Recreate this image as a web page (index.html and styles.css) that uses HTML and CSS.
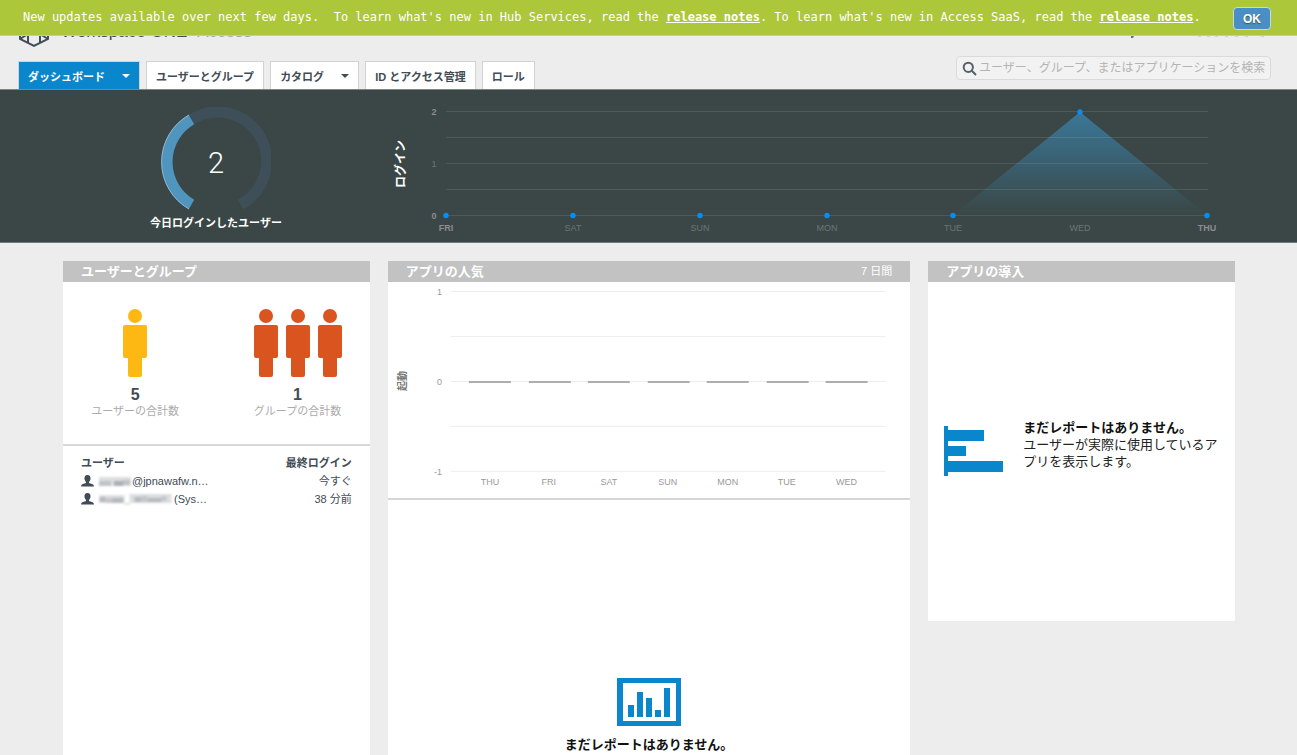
FILE: index.html
```html
<!DOCTYPE html>
<html lang="ja">
<head>
<meta charset="utf-8">
<title>Workspace ONE Access</title>
<link rel="stylesheet" href="styles.css">
</head>
<body>
<div class="notice">
  <p class="notice-text">New updates available over next few days.&nbsp; To learn what's new in Hub Services, read the <a href="#">release notes</a>. To learn what's new in Access SaaS, read the <a href="#">release notes</a>.</p>
  <button class="notice-ok" type="button">OK</button>
</div>

<header class="header">
  <div class="brand-row">
    <svg class="logo" viewBox="0 0 32 32" aria-hidden="true"><path d="M2 8L16 1l14 7v15L16 30L2 23zM2 23l8-5v-8M30 23l-8-5v-8M10 18v9M22 18v9" /></svg>
    <span class="brand">Workspace ONE</span><span class="brand-sub">Access</span>
    <svg class="account" viewBox="0 0 140 8" aria-hidden="true"><path class="account-mark" d="M0 0h3l-1 2H0z"/><path d="M67 0h3v1h-3zM76 0h3v1h-3zM84 0h3v1h-3zM94 0h3v1h-3zM104 0h3v1h-3zM114 0h3v1h-3zM130 0h3v1h-3z"/></svg>
  </div>
  <div class="nav-row">
    <nav class="tabs">
      <a class="tab tab-active" href="#">ダッシュボード<span class="caret"></span></a>
      <a class="tab" href="#">ユーザーとグループ</a>
      <a class="tab" href="#">カタログ<span class="caret"></span></a>
      <a class="tab" href="#">ID とアクセス管理</a>
      <a class="tab" href="#">ロール</a>
    </nav>
    <label class="search">
      <svg class="search-icon" viewBox="0 0 16 16" aria-hidden="true"><circle cx="6.3" cy="7.3" r="4.6"/><path d="M9.8 10.800L14 15"/></svg>
      <input type="text" placeholder="ユーザー、グループ、またはアプリケーションを検索" aria-label="検索">
    </label>
  </div>
</header>

<section class="hero">
  <div class="gauge">
    <svg class="gauge-dial" viewBox="0 0 110 104" role="img" aria-label="2">
      <path class="dial-track" d="M31 12.3A49 49 0 1 1 79.5 97.4"/>
      <path class="dial-value" d="M30.5 97.4A49 49 0 0 1 30.5 12.6"/>
      <path class="dial-shine" d="M28 102A54 54 0 0 1 28 8"/>
      <text class="dial-text" x="55" y="66">2</text>
    </svg>
    <p class="gauge-label">今日ログインしたユーザー</p>
  </div>
  <svg class="logins" viewBox="0 0 860 153" role="img" aria-label="ログイン">
    <defs><linearGradient id="fade" x1="0" y1="0" x2="0" y2="1"><stop offset="0" stop-color="#3a7798"/><stop offset="1" stop-color="#3a7798" stop-opacity="0"/></linearGradient></defs>
    <text class="logins-title" transform="translate(25 75) rotate(-90)">ログイン</text>
    <path class="logins-area" d="M573 126L700 23L827 126z"/>
    <path class="logins-grid" d="M66 22.5H828M66 48.500H828M66 74.500H828M66 100.500H828M66 126.500H828"/>
    <g class="logins-dots"><circle cx="66" cy="126.500" r="2.700"/><circle cx="193" cy="126.500" r="2.700"/><circle cx="320" cy="126.500" r="2.700"/><circle cx="447" cy="126.500" r="2.700"/><circle cx="573" cy="126.500" r="2.700"/><circle cx="700" cy="23" r="2.700"/><circle cx="827" cy="126.500" r="2.700"/></g>
    <g class="logins-text"><text class="strong" x="54" y="26">2</text><text x="54" y="78">1</text><text class="strong" x="54" y="130">0</text>
    <text class="strong" x="66" y="142">FRI</text><text x="193" y="142">SAT</text><text x="320" y="142">SUN</text><text x="447" y="142">MON</text><text x="573" y="142">TUE</text><text x="700" y="142">WED</text><text class="strong" x="827" y="142">THU</text></g>
  </svg>
</section>

<main class="cards">
  <section class="card card-tall">
    <h2 class="card-head">ユーザーとグループ</h2>
    <div class="totals">
      <div class="total">
        <svg class="people people-user" viewBox="0 0 26 70" width="26" aria-hidden="true"><g id="person"><circle cx="13" cy="7" r="7"/><rect x="1" y="16" width="24" height="33" rx="2"/><rect x="6" y="44" width="14" height="24" rx="2"/></g></svg>
        <strong class="total-number">5</strong>
        <span class="total-label">ユーザーの合計数</span>
      </div>
      <div class="total">
        <svg class="people people-group" viewBox="0 0 90 70" width="90" aria-hidden="true"><use href="#person"/><use href="#person" x="32"/><use href="#person" x="64"/></svg>
        <strong class="total-number">1</strong>
        <span class="total-label">グループの合計数</span>
      </div>
    </div>
    <table class="users">
      <thead><tr><th>ユーザー</th><th>最終ログイン</th></tr></thead>
      <tbody>
        <tr><td><div class="user"><svg class="user-icon" viewBox="0 0 13 12" aria-hidden="true"><path id="bust" d="M6.500 0C9 0 9.700 1.700 9.500 4C9.300 5.600 8.500 6.400 8 7v1c1 .7 5 .5 5 3.500H0c0-3 4-2.800 5-3.500V7C4.500 6.400 3.700 5.600 3.500 4C3.300 1.700 4 0 6.500 0z"/></svg><svg class="mask mask-short" viewBox="0 0 32 11" aria-hidden="true"><path fill="#dcdee1" d="M0 1h32v9H0z"/><path fill="#c0c2c6" d="M0 5h12v5H0zM24 4h7v5h-7z"/><path fill="#acafb5" d="M15 5h9v5h-9z"/></svg><span>@jpnawafw.n…</span></div></td><td>今すぐ</td></tr>
        <tr><td><div class="user"><svg class="user-icon" viewBox="0 0 13 12" aria-hidden="true"><use href="#bust"/></svg><svg class="mask mask-long" viewBox="0 0 72 11" aria-hidden="true"><path fill="#dcdee1" d="M0 1h25v8h5V0h42v9H30v2h-5V9H0z"/><path fill="#b6b9be" d="M0 3h6v5H0zM12 4h12v5H12zM35 3h7v5h-7zM48 4h14v4H48z"/><path fill="#c5c7cb" d="M6 4h6v5H6zM42 2h6v6h-6zM62 2h5v5h-5z"/></svg><span>(Sys…</span></div></td><td>38 分前</td></tr>
      </tbody>
    </table>
  </section>

  <section class="card card-tall">
    <h2 class="card-head">アプリの人気<span class="period">7 日間</span></h2>
    <svg class="launches" viewBox="0 0 523 216" role="img" aria-label="起動">
      <text class="launches-title" transform="translate(18 99) rotate(-90)">起動</text>
      <path class="launches-grid" d="M63 9.500H498M63 54.500H498M63 99.500H498M63 144.500H498M63 189.500H498"/>
      <path class="launches-bars" d="M81 100H123M141 100H183M200 100H242M260 100H302M319 100H361M379 100H421M438 100H480"/>
      <g class="launches-text"><g class="launches-axis"><text x="54" y="13">1</text><text x="54" y="103">0</text><text x="54" y="193">-1</text></g>
      <text x="102" y="203">THU</text><text x="161" y="203">FRI</text><text x="221" y="203">SAT</text><text x="280" y="203">SUN</text><text x="340" y="203">MON</text><text x="399" y="203">TUE</text><text x="459" y="203">WED</text></g>
    </svg>
    <div class="report-empty">
      <svg class="report-icon" viewBox="0 0 64 48" aria-hidden="true"><path fill-rule="evenodd" d="M0 0h64v48H0zM6 5v38h53V5z"/><path d="M11 27h6v12h-6zM20 14h6v25h-6zM29 20h6v19h-6zM38 32h6v7h-6zM47 10h6v29h-6z"/></svg>
      <strong>まだレポートはありません。</strong>
    </div>
  </section>

  <section class="card card-short">
    <h2 class="card-head">アプリの導入</h2>
    <div class="adoption">
      <svg class="adoption-icon" viewBox="0 0 59 50" aria-hidden="true"><path d="M0 0h4v4h36v11H4v5h18v10H4v5h55v11H4v4H0z"/></svg>
      <p><strong>まだレポートはありません。</strong><br>ユーザーが実際に使用しているアプリを表示します。</p>
    </div>
  </section>
</main>
</body>
</html>
```
FILE: styles.css
```css
* { box-sizing: border-box; }

body {
  margin: 0;
  background: #ededed;
  color: #414c56;
  font-family: "Liberation Sans", "Noto Sans CJK JP", sans-serif;
  font-size: 11px;
}

p, h2 { margin: 0; }
svg { display: block; }

.notice {
  position: fixed;
  inset: 0 0 auto 0;
  z-index: 10;
  display: flex;
  align-items: center;
  justify-content: space-between;
  height: 36px;
  padding: 0 26px 0 23px;
  background: #adc73a;
  border-bottom: 1px solid #c6d670;
  color: #fff;
}
.notice-text {
  padding-bottom: 2px;
  font: 12px/18px "DejaVu Sans Mono", monospace;
  white-space: nowrap;
}
.notice-text a { color: #fff; font-weight: bold; }
.notice-ok {
  width: 38px;
  height: 23px;
  margin-top: 2px;
  padding: 0;
  border: 1px solid #c5dbe2;
  border-radius: 4px;
  background: #498fc5;
  color: #fff;
  font: bold 12px "Liberation Sans", sans-serif;
  text-shadow: 0 1px 1px #40543a;
}

.header { padding: 16px 26px 0 18px; }
.brand-row {
  display: flex;
  align-items: center;
  height: 32px;
}
.logo {
  width: 32px;
  height: 32px;
  fill: none;
  stroke: #414c56;
  stroke-width: 2;
}
.brand { margin-left: 11px; font-size: 17px; }
.brand-sub { margin-left: 10px; color: #a5a9ad; font-size: 17px; }
.account {
  align-self: flex-end;
  width: 140px;
  height: 8px;
  margin: 0 0 4px auto;
  fill: #d0d2d3;
}
.account-mark { fill: #68717a; }
.nav-row {
  display: flex;
  justify-content: space-between;
  height: 41px;
  padding-top: 8px;
}
.tabs { display: flex; gap: 6px; padding-top: 5px; }
.tab {
  display: flex;
  align-items: center;
  height: 28px;
  padding: 0 9px;
  border: 1px solid #d2d2d2;
  border-bottom: 0;
  background: #fff;
  color: #414c56;
  font-size: 11px;
  font-weight: bold;
  text-decoration: none;
  white-space: nowrap;
}
.tab-active { background: #0a87cc; color: #fff; }
.caret {
  margin-left: 17px;
  border: 4px solid transparent;
  border-top-color: currentColor;
  border-bottom: 0;
}
.search {
  display: flex;
  align-items: center;
  width: 315px;
  height: 24px;
  padding: 0 5px;
  border: 1px solid #dadada;
  border-radius: 4px;
  background: #f2f2f2;
}
.search-icon {
  flex: none;
  width: 16px;
  height: 16px;
  fill: none;
  stroke: #58616a;
  stroke-width: 2;
}
.search input {
  flex: 1;
  min-width: 0;
  padding: 0 0 0 1px;
  border: 0;
  outline: 0;
  background: none;
  font: 12px "Liberation Sans", "Noto Sans CJK JP", sans-serif;
}
.search input::placeholder { color: #b4b4b4; }

.hero {
  display: grid;
  grid-template-columns: 380fr 860fr 57fr;
  border-bottom: 1px solid #717d79;
  background: #3a4746;
  box-shadow: inset 0 1px #7c8783;
}
.gauge {
  display: flex;
  flex-direction: column;
  align-items: center;
  padding: 18px 0 0 52px;
  color: #fff;
}
.gauge-dial { width: 110px; }
.dial-track, .dial-value { fill: none; stroke: #3e4f59; stroke-width: 11; }
.dial-value { stroke: #4f95bd; }
.dial-shine { fill: none; stroke: #8fb8d0; stroke-width: 1; }
.dial-text { fill: #fff; font: 300 29px Roboto, sans-serif; text-anchor: middle; }
.gauge-label { font-size: 11px; font-weight: bold; line-height: 24px; }
.logins { width: 100%; }
.logins-title { fill: #fff; font-size: 12px; font-weight: bold; text-anchor: middle; }
.logins-area { fill: url(#fade); }
.logins-grid { stroke: #fff; stroke-opacity: .1; }
.logins-dots { fill: #078df0; }
.logins-text { fill: #6c7475; font-size: 9px; text-anchor: middle; }
.strong { fill: #8c8c91; font-weight: bold; }

.cards {
  display: grid;
  grid-template-columns: 307fr 523fr 307fr;
  gap: 18px;
  align-items: start;
  padding: 18px 62px 18px 63px;
}
.card { background: #fff; }
.card-tall { min-height: 540px; }
.card-short { min-height: 360px; }
.card-head {
  display: flex;
  align-items: center;
  justify-content: space-between;
  height: 21px;
  padding: 0 18px;
  background: #c2c2c2;
  color: #fff;
  font-size: 13px;
  line-height: 19px;
}
.period { font-size: 11px; font-weight: normal; }

.totals {
  display: grid;
  grid-template-columns: 1fr 1fr;
  column-gap: 18px;
  height: 164px;
  padding-top: 27px;
  border-bottom: 2px solid #d8d8d8;
}
.total {
  display: flex;
  flex-direction: column;
  align-items: center;
}
.people { height: 70px; }
.people-user { fill: #fdb813; }
.people-group { fill: #d9541e; }
.total-number { padding-top: 7px; font-size: 16px; line-height: 18px; }
.total-label { color: #ababab; line-height: 14px; }

.users {
  width: calc(100% - 36px);
  margin: 8px 18px;
  border-collapse: collapse;
}
.users th, .users td { height: 18px; padding: 0; line-height: 18px; text-align: left; }
.users th:last-child, .users td:last-child { text-align: right; }
.user { display: flex; align-items: center; }
.user-icon { width: 13px; height: 12px; fill: #414c56; }
.mask { height: 11px; margin: 0 1px 0 5px; filter: blur(1px); }
.mask-short { width: 32px; }
.mask-long { width: 73px; margin-right: 2px; }

.launches { width: 100%; }
.launches-title { fill: #777; font-size: 10px; font-weight: bold; text-anchor: middle; }
.launches-grid { stroke: #ededed; }
.launches-bars { stroke: #adadad; stroke-width: 2; }
.launches-text { fill: #999; font-size: 9px; text-anchor: middle; }
.launches-axis { text-anchor: end; }
.report-empty {
  display: flex;
  flex-direction: column;
  align-items: center;
  gap: 9px;
  padding-top: 178px;
  border-top: 2px solid #d6d6d6;
  color: #111;
  font-size: 13px;
  line-height: 20px;
}
.report-icon { width: 64px; height: 48px; fill: #0a87cc; }

.adoption {
  display: flex;
  gap: 20px;
  padding: 137px 16px 0;
  color: #222;
  font-size: 13px;
  line-height: 17px;
}
.adoption strong { color: #111; }
.adoption-icon { flex: none; width: 59px; height: 50px; margin-top: 7px; fill: #0a87cc; }
```
